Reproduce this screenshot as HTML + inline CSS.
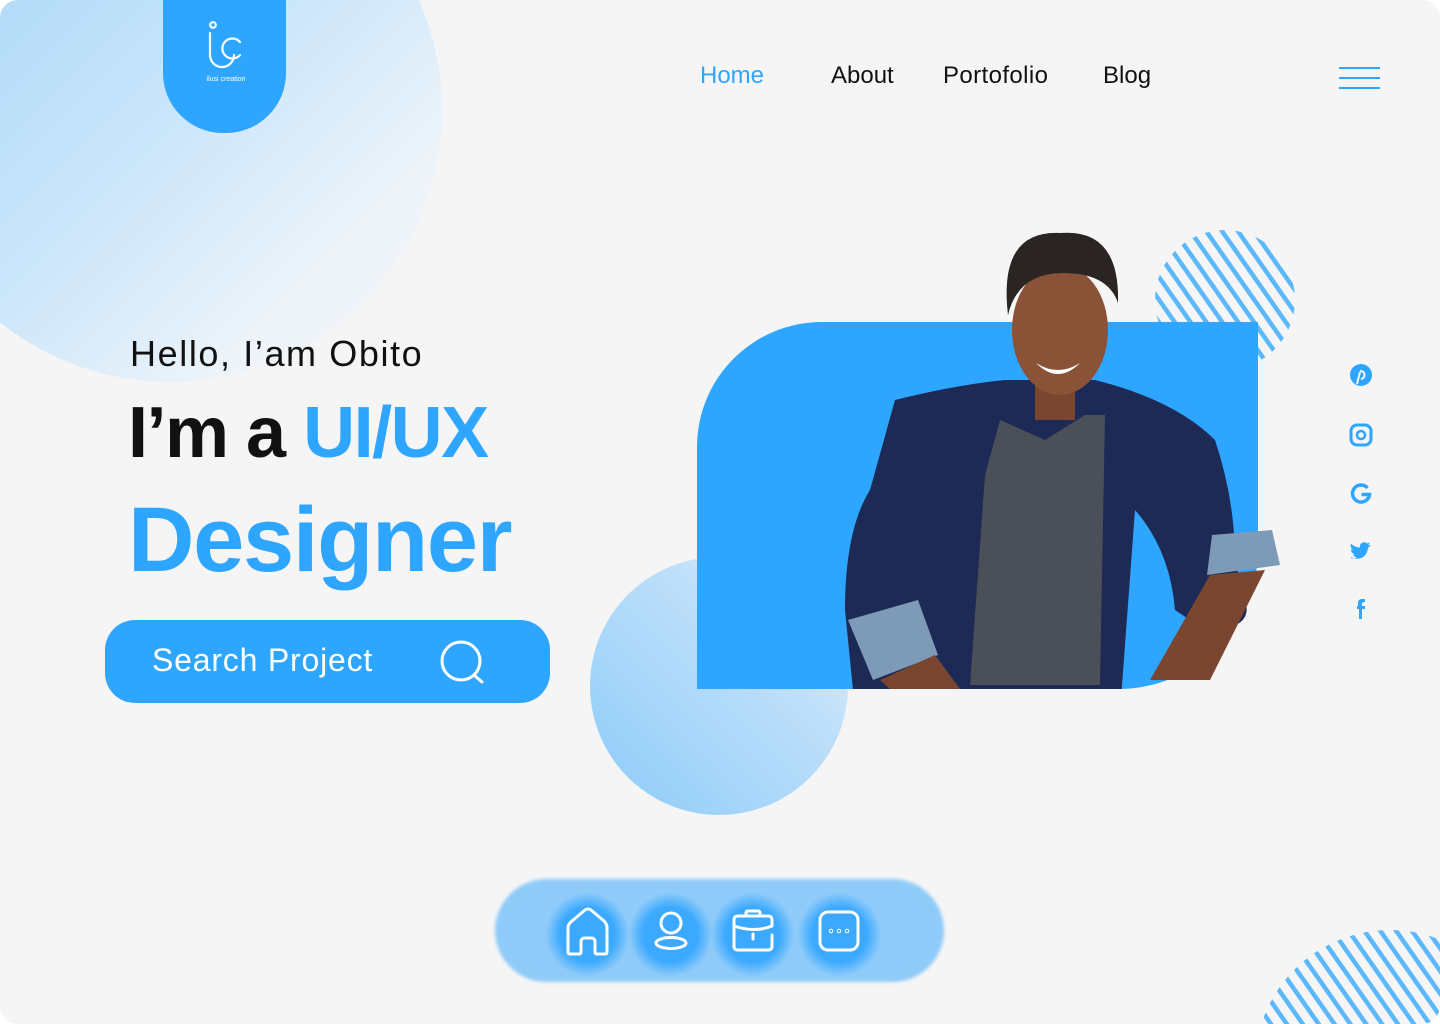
<!DOCTYPE html>
<html><head><meta charset="utf-8"><style>
*{margin:0;padding:0;box-sizing:border-box}
html,body{width:1440px;height:1024px;overflow:hidden;background:#fff;font-family:"Liberation Sans",sans-serif}
.page{position:absolute;left:0;top:0;width:1440px;height:1024px;background:#f5f5f5;border-radius:18px;overflow:hidden}
.abs{position:absolute}
.nav a{position:absolute;top:62px;font-size:24px;color:#111;text-decoration:none}
</style></head><body><div class="page">
<div class="abs" style="left:-102px;top:-162px;width:544px;height:544px;border-radius:50%;background:linear-gradient(135deg,#9fd2f8 0%,#c9e5fa 50%,#eef4f9 80%)"></div>
<div class="abs" style="left:163px;top:-20px;width:123px;height:153px;border-radius:0 0 60px 60px;background:#2ea6ff"></div>
<svg class="abs" style="left:200px;top:18px" width="52" height="52" viewBox="0 0 52 52" fill="none" stroke="#fff" stroke-width="2.2" stroke-linecap="round">
<circle cx="13" cy="7" r="2.8"/><path d="M10 15v22a12 12 0 0 0 24 0"/><path d="M40 24a10 10 0 1 0 0 13"/></svg>
<div class="abs" style="left:196px;top:76px;width:60px;text-align:center;color:#fff;font-size:7px">ilusi creation</div>
<div class="nav"><a style="left:700px;color:#2ea6ff">Home</a><a style="left:831px">About</a><a style="left:943px;letter-spacing:0.4px">Portofolio</a><a style="left:1103px">Blog</a></div>
<div class="abs" style="left:1339px;top:67px;width:41px;height:2px;background:#2ea6ff;box-shadow:0 10px 0 #2ea6ff,0 20px 0 #2ea6ff"></div>
<div class="abs" style="left:130px;top:333px;font-size:36px;color:#111;letter-spacing:1.6px">Hello, I’am Obito</div>
<div class="abs" style="left:128px;top:392px;font-size:72px;font-weight:bold;color:#111;letter-spacing:-1.5px">I’m a <span style="color:#2ea6ff">UI/UX</span></div>
<div class="abs" style="left:128px;top:488px;font-size:92px;font-weight:bold;color:#2ea6ff;letter-spacing:-1.3px">Designer</div>
<div class="abs" style="left:105px;top:620px;width:445px;height:83px;border-radius:30px;background:#2ea6ff"></div>
<div class="abs" style="left:152px;top:642px;font-size:32px;color:#fff;letter-spacing:0.8px">Search Project</div>
<svg class="abs" style="left:440px;top:640px" width="46" height="46" fill="none" stroke="#fff" stroke-width="3"><circle cx="21" cy="21" r="19"/><path d="M35 36l7 6" stroke-linecap="round"/></svg>
<div class="abs" style="left:590px;top:557px;width:258px;height:258px;border-radius:50%;background:linear-gradient(225deg,#eef4fa 0%,#bfe0fa 35%,#8ccbf9 100%)"></div>
<svg class="abs" style="left:1155px;top:230px" width="140" height="140"><defs><pattern id="st" width="13" height="13" patternUnits="userSpaceOnUse" patternTransform="rotate(-35)"><rect width="4.5" height="13" fill="#5ab8fb"/></pattern><clipPath id="c1"><circle cx="70" cy="70" r="70"/></clipPath></defs><rect width="140" height="140" fill="url(#st)" clip-path="url(#c1)"/></svg>
<svg class="abs" style="left:1250px;top:930px" width="190" height="94"><defs><clipPath id="c2"><circle cx="140" cy="135" r="135"/></clipPath></defs><rect width="300" height="300" fill="url(#st)" clip-path="url(#c2)"/></svg>
<div class="abs" style="left:697px;top:322px;width:561px;height:367px;background:#2ea6ff;border-radius:125px 0 140px 0"></div>
<svg class="abs" style="left:690px;top:220px" width="610" height="469">
<path d="M205 180 q60 -15 110 -20 l90 0 q80 20 120 60 q20 60 20 120 l10 40 q10 30 -40 30 l-30 -20 q-5 -60 -40 -100 l-20 270 -260 0 q-10 -40 0 -70 l-10 -100 q0 -80 25 -120 z" fill="#1c2a55"/>
<path d="M310 200 l45 20 40 -25 20 0 -5 270 -130 0 15 -210z" fill="#4b4f58"/>
<path d="M158 400 l70 -20 20 55 -65 25z M590 345 l-8 -35 -60 5 -5 40z" fill="#7d9ab6"/>
<path d="M190 460 l55 -25 25 34 -70 0z M520 355 l55 -5 -55 110 -60 0 z" fill="#7a4630"/>
<rect x="345" y="160" width="40" height="40" fill="#7a4630"/>
<ellipse cx="370" cy="110" rx="48" ry="65" fill="#8a5338"/>
<path d="M318 95 q-10 -85 52 -82 q60 -5 58 70 q-10 -30 -55 -30 q-45 0 -55 42z" fill="#2a2422"/>
<path d="M346 143 q22 14 44 0 q-22 22 -44 0z" fill="#fff"/>
</svg>
<svg class="abs" style="left:1349px;top:363px" width="24" height="260" fill="#2ea6ff">
<circle cx="12" cy="12" r="11"/><path d="M11 8a4 4 0 1 1 1 8M11 9l-3 12" stroke="#f5f5f5" stroke-width="2" fill="none"/>
<rect x="2" y="62" width="20" height="20" rx="6" fill="none" stroke="#2ea6ff" stroke-width="3"/><circle cx="12" cy="72" r="4" fill="none" stroke="#2ea6ff" stroke-width="2.5"/>
<path d="M18.5 125 A8.5 8.5 0 1 0 20.5 131.5 H12.5" fill="none" stroke="#2ea6ff" stroke-width="3.5"/>
<path d="M2 194c7 4 16 1 17-9l3-3-3 .5 2-3-3 1c-3-3-8 0-7 4-4 0-7-2-9-4-1 3 0 5 2 6l-2 0c0 3 2 4 4 5h-2c1 2 3 3 4 3-2 1-4 1-6 .5z"/>
<path d="M13 256v-10h3v-3h-3v-2c0-1 1-2 2-2h1v-3h-3c-3 0-4 2-4 4v3H8v3h2v10z"/>
</svg>
<div class="abs" style="left:495px;top:879px;width:449px;height:103px;border-radius:52px;background:#8fcbf9;filter:blur(1.5px)"></div>
<div class="abs" style="left:545px;top:892px;width:85px;height:85px;border-radius:50%;background:radial-gradient(#3aa9ff 45%,rgba(58,169,255,0) 70%)"></div>
<div class="abs" style="left:628px;top:892px;width:85px;height:85px;border-radius:50%;background:radial-gradient(#3aa9ff 45%,rgba(58,169,255,0) 70%)"></div>
<div class="abs" style="left:710px;top:892px;width:85px;height:85px;border-radius:50%;background:radial-gradient(#3aa9ff 45%,rgba(58,169,255,0) 70%)"></div>
<div class="abs" style="left:797px;top:892px;width:85px;height:85px;border-radius:50%;background:radial-gradient(#3aa9ff 45%,rgba(58,169,255,0) 70%)"></div>
<svg class="abs" style="left:0;top:0" width="1440" height="1024" fill="none" stroke="#fff" stroke-width="3" stroke-linecap="round" stroke-linejoin="round">
<path d="M568 952v-24q0-4 4-7l13-11q3-2 6 0l13 11q3 3 3 7v24q0 2-2 2h-8q-2 0-2-2v-10q0-4-4-4h-6q-4 0-4 4v10q0 2-2 2h-9q-2 0-2-2z"/>
<circle cx="671" cy="923" r="10"/><ellipse cx="671" cy="943" rx="15" ry="5.5"/>
<path d="M734 938v-18q0-4 4-4h30q4 0 4 4v6q-17 7-38 0M734 935v11q0 4 4 4h30q4 0 4-4v-11M746 916v-3q0-2 2-2h10q2 0 2 2v3M753 934v5"/>
<rect x="820" y="912" width="38" height="38" rx="8"/>
<circle cx="831" cy="931" r=".5" stroke-width="3.5"/><circle cx="839" cy="931" r=".5" stroke-width="3.5"/><circle cx="847" cy="931" r=".5" stroke-width="3.5"/>
</svg>
</div></body></html>
